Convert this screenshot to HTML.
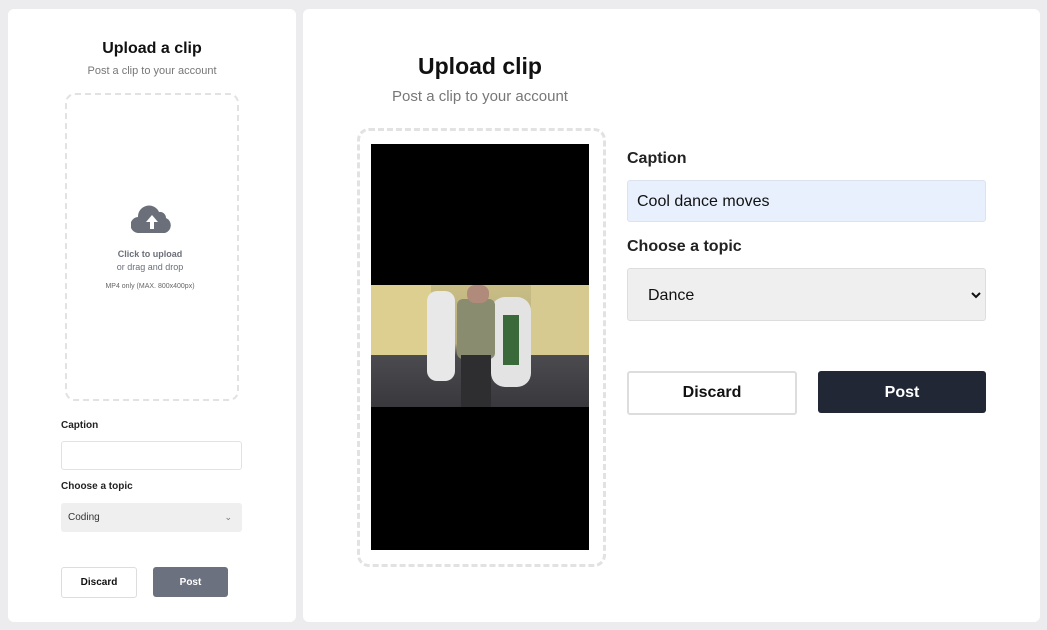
<!DOCTYPE html><html><head><style>
body{margin:0;width:1047px;height:630px;background:#ececef;font-family:"Liberation Sans",sans-serif;position:relative;overflow:hidden}
.a{position:absolute}
.p{background:#fff;border-radius:6px}
.c{text-align:center}
</style></head><body>
<div class="a p" style="left:8px;top:9px;width:288px;height:613px"></div>
<div class="a p" style="left:303px;top:9px;width:737px;height:613px"></div>
<div class="a c" style="left:8px;top:40px;width:288px;font-weight:bold;font-size:16px;color:#111">Upload a clip</div>
<div class="a c" style="left:8px;top:65px;width:288px;font-size:11px;color:#777">Post a clip to your account</div>
<div class="a" style="left:65px;top:93px;width:170px;height:304px;border:2px dashed #e2e2e2;border-radius:10px"></div>
<svg class="a" style="left:131px;top:205px" width="42" height="28" viewBox="0 0 42 28"><path d="M8 28a8 8 0 0 1-1-16 11 11 0 0 1 21-5 6 6 0 0 1 7 6 8 8 0 0 1-1 15z" fill="#6b6f7a"/><path d="M21 10l-6 7h4v7h4v-7h4z" fill="#fff"/></svg>
<div class="a c" style="left:65px;top:249px;width:170px;font-size:9px;font-weight:bold;color:#6b6f7a">Click to upload</div>
<div class="a c" style="left:65px;top:262px;width:170px;font-size:9px;color:#6b6f7a">or drag and drop</div>
<div class="a c" style="left:65px;top:283px;width:170px;font-size:7px;color:#666">MP4 only (MAX. 800x400px)</div>
<div class="a" style="left:61px;top:420px;font-size:10px;font-weight:bold;color:#222">Caption</div>
<div class="a" style="left:61px;top:441px;width:179px;height:27px;border:1px solid #e2e2e2;border-radius:3px"></div>
<div class="a" style="left:61px;top:481px;font-size:10px;font-weight:bold;color:#222">Choose a topic</div>
<div class="a" style="left:61px;top:503px;width:181px;height:29px;background:#efefef;border-radius:3px;font-size:10px;color:#333;line-height:29px;text-indent:7px">Coding<span class="a" style="right:10px;top:0;font-size:9px;color:#777">&#8964;</span></div>
<div class="a c" style="left:61px;top:567px;width:74px;height:29px;border:1px solid #ddd;border-radius:3px;font-size:10px;font-weight:bold;line-height:29px;color:#111">Discard</div>
<div class="a c" style="left:153px;top:567px;width:75px;height:30px;background:#6b717e;border-radius:3px;font-size:10px;font-weight:bold;line-height:31px;color:#fff">Post</div>
<div class="a c" style="left:380px;top:53px;width:200px;font-weight:bold;font-size:23px;color:#111">Upload clip</div>
<div class="a c" style="left:360px;top:88px;width:240px;font-size:15px;color:#777">Post a clip to your account</div>
<div class="a" style="left:357px;top:128px;width:243px;height:433px;border:3px dashed #e2e2e2;border-radius:12px"></div>
<div class="a" style="left:371px;top:144px;width:218px;height:406px;background:#000"></div>
<div class="a" style="left:371px;top:285px;width:218px;height:122px;background:linear-gradient(180deg,#c9bd85 0%,#b9ae7c 48%,#4b4b4f 58%,#39393d 100%)">
<div class="a" style="left:0;top:0;width:60px;height:70px;background:#dccf8f"></div>
<div class="a" style="left:160px;top:0;width:58px;height:70px;background:#d6ca90"></div>
<div class="a" style="left:56px;top:6px;width:28px;height:90px;background:#e8e8e8;border-radius:10px"></div>
<div class="a" style="left:120px;top:12px;width:40px;height:90px;background:#e3e3e3;border-radius:14px"></div>
<div class="a" style="left:132px;top:30px;width:16px;height:50px;background:#3a6a3a"></div>
<div class="a" style="left:86px;top:14px;width:38px;height:60px;background:#8a8c70;border-radius:6px"></div>
<div class="a" style="left:90px;top:70px;width:30px;height:52px;background:#2e2e30"></div>
<div class="a" style="left:96px;top:0;width:22px;height:18px;background:#b08a7a;border-radius:8px"></div>
</div>
<div class="a" style="left:627px;top:150px;font-size:16px;font-weight:bold;color:#222">Caption</div>
<div class="a" style="left:627px;top:180px;width:357px;height:40px;background:#e8f0fe;border:1px solid #dde3ee;border-radius:3px;font-size:16px;line-height:42px;text-indent:9px;color:#111">Cool dance moves</div>
<div class="a" style="left:627px;top:238px;font-size:16px;font-weight:bold;color:#222">Choose a topic</div>
<div class="a" style="left:627px;top:268px;width:357px;height:51px;background:#efefef;border:1px solid #ddd;border-radius:3px;font-size:16px;line-height:54px;text-indent:20px;color:#111">Dance<svg class="a" style="right:4px;top:22px" width="10" height="8" viewBox="0 0 10 8"><path d="M1 2l4 4 4-4" fill="none" stroke="#111" stroke-width="2"/></svg></div>
<div class="a c" style="left:627px;top:371px;width:166px;height:40px;border:2px solid #ddd;border-radius:3px;font-size:16px;font-weight:bold;line-height:40px;color:#111">Discard</div>
<div class="a c" style="left:818px;top:371px;width:168px;height:42px;background:#212735;border-radius:3px;font-size:16px;font-weight:bold;line-height:44px;color:#fff">Post</div>
</body></html>
